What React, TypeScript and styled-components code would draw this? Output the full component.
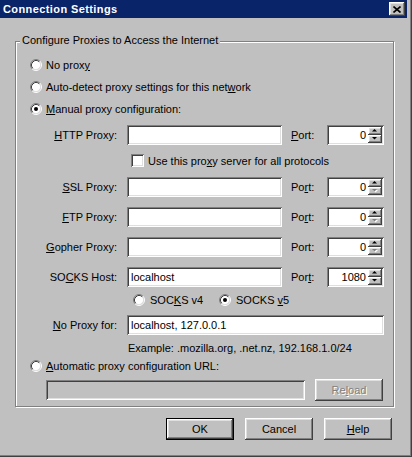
import React from 'react';
import styled, { createGlobalStyle, css } from 'styled-components';

const FACE = '#c0c0c0';

const GlobalStyle = createGlobalStyle`
  html, body {
    margin: 0;
    padding: 0;
    background: ${FACE};
  }
  body {
    font-family: "Liberation Sans", Arial, sans-serif;
    font-size: 11px;
    color: #000;
  }
`;

const raised = css`
  box-shadow: inset -1px -1px 0 #404040, inset 1px 1px 0 #fff, inset -2px -2px 0 #808080,
    inset 2px 2px 0 #dfdfdf;
`;

const sunken = css`
  box-shadow: inset 1px 1px 0 #808080, inset -1px -1px 0 #fff, inset 2px 2px 0 #404040,
    inset -2px -2px 0 #dfdfdf;
`;

const Window = styled.div`
  width: 412px;
  height: 457px;
  box-sizing: border-box;
  background: ${FACE};
  box-shadow: inset -1px -1px 0 #404040, inset -2px -2px 0 #808080;
  display: flex;
  flex-direction: column;
  overflow: hidden;
`;

const TitleBar = styled.div`
  height: 18px;
  margin-right: 5px;
  padding: 0 2px 0 3px;
  background: #0a246a;
  display: flex;
  align-items: center;
  justify-content: space-between;
`;

const Caption = styled.span`
  color: #fff;
  font-weight: bold;
  letter-spacing: 0.4px;
  line-height: 13px;
`;

const CloseButton = styled.div`
  ${raised};
  width: 16px;
  height: 14px;
  background: ${FACE};
  display: flex;
  align-items: center;
  justify-content: center;
`;

const Group = styled.div`
  position: relative;
  margin: 23px 0 0 15px;
  width: 379px;
  height: 366px;
  box-sizing: border-box;
  border: 1px solid #808080;
  box-shadow: 1px 1px 0 #fff, inset 1px 1px 0 #fff;
  padding: 12px 0 0 14px;
  display: flex;
  flex-direction: column;
`;

const GroupTitle = styled.span`
  position: absolute;
  top: -8px;
  left: 4px;
  padding: 0 2px;
  background: ${FACE};
  line-height: 13px;
`;

const Key = styled.span`
  text-decoration: underline;
`;

const OptionRow = styled.div<{ $height?: number; $top?: number; $indent?: number }>`
  display: flex;
  align-items: center;
  gap: 4px;
  height: ${(p) => p.$height ?? 22}px;
  margin-top: ${(p) => p.$top ?? 0}px;
  padding-left: ${(p) => p.$indent ?? 0}px;
  white-space: nowrap;
`;

const RadioIcon = styled.svg`
  flex: none;
  display: block;
`;

const CheckBox = styled.div`
  ${sunken};
  flex: none;
  width: 13px;
  height: 13px;
  background: #fff;
`;

const FieldRow = styled.div<{ $top: number; $indent?: number }>`
  display: flex;
  align-items: center;
  height: 20px;
  margin-top: ${(p) => p.$top}px;
  padding-left: ${(p) => p.$indent ?? 0}px;
`;

const FieldLabel = styled.label`
  width: 87px;
  margin-right: 10px;
  text-align: right;
  white-space: nowrap;
  line-height: 13px;
`;

const TextBox = styled.input<{ $width: number }>`
  ${sunken};
  width: ${(p) => p.$width}px;
  height: 20px;
  box-sizing: border-box;
  margin: 0;
  border: none;
  outline: none;
  padding: 0 4px;
  font: inherit;
  color: #000;
  background: #fff;

  &:disabled {
    background: ${FACE};
  }
`;

const PortLabel = styled.label`
  width: 36px;
  margin-left: 9px;
  line-height: 13px;
`;

const PortBox = styled.div`
  ${sunken};
  width: 57px;
  height: 20px;
  box-sizing: border-box;
  padding: 2px;
  background: #fff;
  display: flex;
  align-items: center;
`;

const PortValue = styled.span`
  flex: 1;
  text-align: right;
  padding-right: 2px;
  line-height: 13px;
`;

const Spinner = styled.div`
  width: 14px;
  height: 16px;
  display: flex;
  flex-direction: column;
`;

const SpinButton = styled.div`
  ${raised};
  flex: 1;
  background: ${FACE};
  display: flex;
  align-items: center;
  justify-content: center;
`;

const VersionItem = styled.div<{ $width?: number }>`
  display: flex;
  align-items: center;
  gap: 5px;
  width: ${(p) => (p.$width ? `${p.$width}px` : 'auto')};
`;

const Hint = styled.div`
  height: 13px;
  line-height: 13px;
  margin-top: 7px;
  padding-left: 98px;
  white-space: nowrap;
`;

const PushButton = styled.button<{ $default?: boolean; $width?: number }>`
  width: ${(p) => p.$width ?? 68}px;
  height: 22px;
  margin: 0;
  padding: 0;
  border: none;
  background: ${FACE};
  font: inherit;
  color: #000;
  ${(p) =>
    p.$default
      ? css`
          box-shadow: inset 0 0 0 1px #000, inset -2px -2px 0 #404040, inset 2px 2px 0 #fff,
            inset -3px -3px 0 #808080, inset 3px 3px 0 #dfdfdf;
        `
      : raised};

  &:disabled {
    color: #808080;
    text-shadow: 1px 1px 0 #fff;
  }
`;

const ButtonBar = styled.div`
  display: flex;
  gap: 11px;
  margin: 11px 0 0 166px;
`;

const Radio: React.FC<{ checked?: boolean }> = ({ checked }) => (
  <RadioIcon width="12" height="12" viewBox="0 0 12 12">
    <circle cx="6" cy="6" r="4.5" fill="#fff" />
    <path d="M2.11 9.89A5.5 5.5 0 0 1 9.89 2.11" stroke="#808080" fill="none" />
    <path d="M9.89 2.11A5.5 5.5 0 0 1 2.11 9.89" stroke="#fff" fill="none" />
    <path d="M2.82 9.18A4.5 4.5 0 0 1 9.18 2.82" stroke="#404040" fill="none" />
    <path d="M9.18 2.82A4.5 4.5 0 0 1 2.82 9.18" stroke="#dfdfdf" fill="none" />
    {checked && <circle cx="6" cy="6" r="2" fill="#000" />}
  </RadioIcon>
);

const Arrow: React.FC<{ down?: boolean; disabled?: boolean }> = ({ down, disabled }) => (
  <svg width="6" height="4" viewBox="0 0 6 4" style={{ display: 'block' }}>
    {disabled && (
      <polygon points={down ? '1,1 6,1 3.5,3.5' : '3.5,0.5 6,3 1,3'} fill="#fff" />
    )}
    <polygon
      points={down ? '0,0 5,0 2.5,2.5' : '2.5,0 5,2.5 0,2.5'}
      fill={disabled ? '#808080' : '#000'}
    />
  </svg>
);

const Port: React.FC<{ value: string; atMin?: boolean }> = ({ value, atMin }) => (
  <PortBox>
    <PortValue>{value}</PortValue>
    <Spinner>
      <SpinButton>
        <Arrow />
      </SpinButton>
      <SpinButton>
        <Arrow down disabled={atMin} />
      </SpinButton>
    </Spinner>
  </PortBox>
);

type ProxyRow = {
  label: React.ReactNode;
  port: React.ReactNode;
  host: string;
  value: string;
  atMin?: boolean;
  top: number;
};

const proxyRows: ProxyRow[] = [
  {
    label: <><Key>S</Key>SL Proxy:</>,
    port: <>Po<Key>r</Key>t:</>,
    host: '',
    value: '0',
    atMin: true,
    top: 10,
  },
  {
    label: <><Key>F</Key>TP Proxy:</>,
    port: <>Po<Key>r</Key>t:</>,
    host: '',
    value: '0',
    atMin: true,
    top: 10,
  },
  {
    label: <><Key>G</Key>opher Proxy:</>,
    port: <>Port:</>,
    host: '',
    value: '0',
    atMin: true,
    top: 10,
  },
  {
    label: <>SO<Key>C</Key>KS Host:</>,
    port: <>Por<Key>t</Key>:</>,
    host: 'localhost',
    value: '1080',
    top: 10,
  },
];

export default function App() {
  return (
    <>
      <GlobalStyle />
      <Window>
        <TitleBar>
          <Caption>Connection Settings</Caption>
          <CloseButton>
            <svg width="8" height="7" viewBox="0 0 8 7">
              <path d="M0.5 0.5L7.5 6.5M7.5 0.5L0.5 6.5" stroke="#000" strokeWidth="1.6" />
            </svg>
          </CloseButton>
        </TitleBar>

        <Group>
          <GroupTitle>Configure Proxies to Access the Internet</GroupTitle>

          <OptionRow>
            <Radio />
            <span>
              No prox<Key>y</Key>
            </span>
          </OptionRow>
          <OptionRow>
            <Radio />
            <span>
              Auto-detect proxy settings for this net<Key>w</Key>ork
            </span>
          </OptionRow>
          <OptionRow>
            <Radio checked />
            <span>
              <Key>M</Key>anual proxy configuration:
            </span>
          </OptionRow>

          <FieldRow $top={5}>
            <FieldLabel>
              <Key>H</Key>TTP Proxy:
            </FieldLabel>
            <TextBox $width={155} defaultValue="" />
            <PortLabel>
              <Key>P</Key>ort:
            </PortLabel>
            <Port value="0" />
          </FieldRow>

          <OptionRow $height={13} $top={9} $indent={101}>
            <CheckBox />
            <span>
              Use this pro<Key>x</Key>y server for all protocols
            </span>
          </OptionRow>

          {proxyRows.map((row, i) => (
            <FieldRow key={i} $top={row.top}>
              <FieldLabel>{row.label}</FieldLabel>
              <TextBox $width={155} defaultValue={row.host} />
              <PortLabel>{row.port}</PortLabel>
              <Port value={row.value} atMin={row.atMin} />
            </FieldRow>
          ))}

          <OptionRow $height={12} $top={7} $indent={103}>
            <VersionItem $width={82}>
              <Radio />
              <span>
                SOC<Key>K</Key>S v4
              </span>
            </VersionItem>
            <VersionItem>
              <Radio checked />
              <span>
                SOCKS <Key>v</Key>5
              </span>
            </VersionItem>
          </OptionRow>

          <FieldRow $top={9}>
            <FieldLabel>
              <Key>N</Key>o Proxy for:
            </FieldLabel>
            <TextBox $width={257} defaultValue="localhost, 127.0.0.1" />
          </FieldRow>

          <Hint>Example: .mozilla.org, .net.nz, 192.168.1.0/24</Hint>

          <OptionRow $height={13} $top={4}>
            <Radio />
            <span>
              <Key>A</Key>utomatic proxy configuration URL:
            </span>
          </OptionRow>

          <OptionRow $top={7} $indent={16} style={{ gap: 10 }}>
            <TextBox $width={259} disabled defaultValue="" />
            <PushButton disabled>
              Re<Key>l</Key>oad
            </PushButton>
          </OptionRow>
        </Group>

        <ButtonBar>
          <PushButton $default>OK</PushButton>
          <PushButton>Cancel</PushButton>
          <PushButton>
            <Key>H</Key>elp
          </PushButton>
        </ButtonBar>
      </Window>
    </>
  );
}
